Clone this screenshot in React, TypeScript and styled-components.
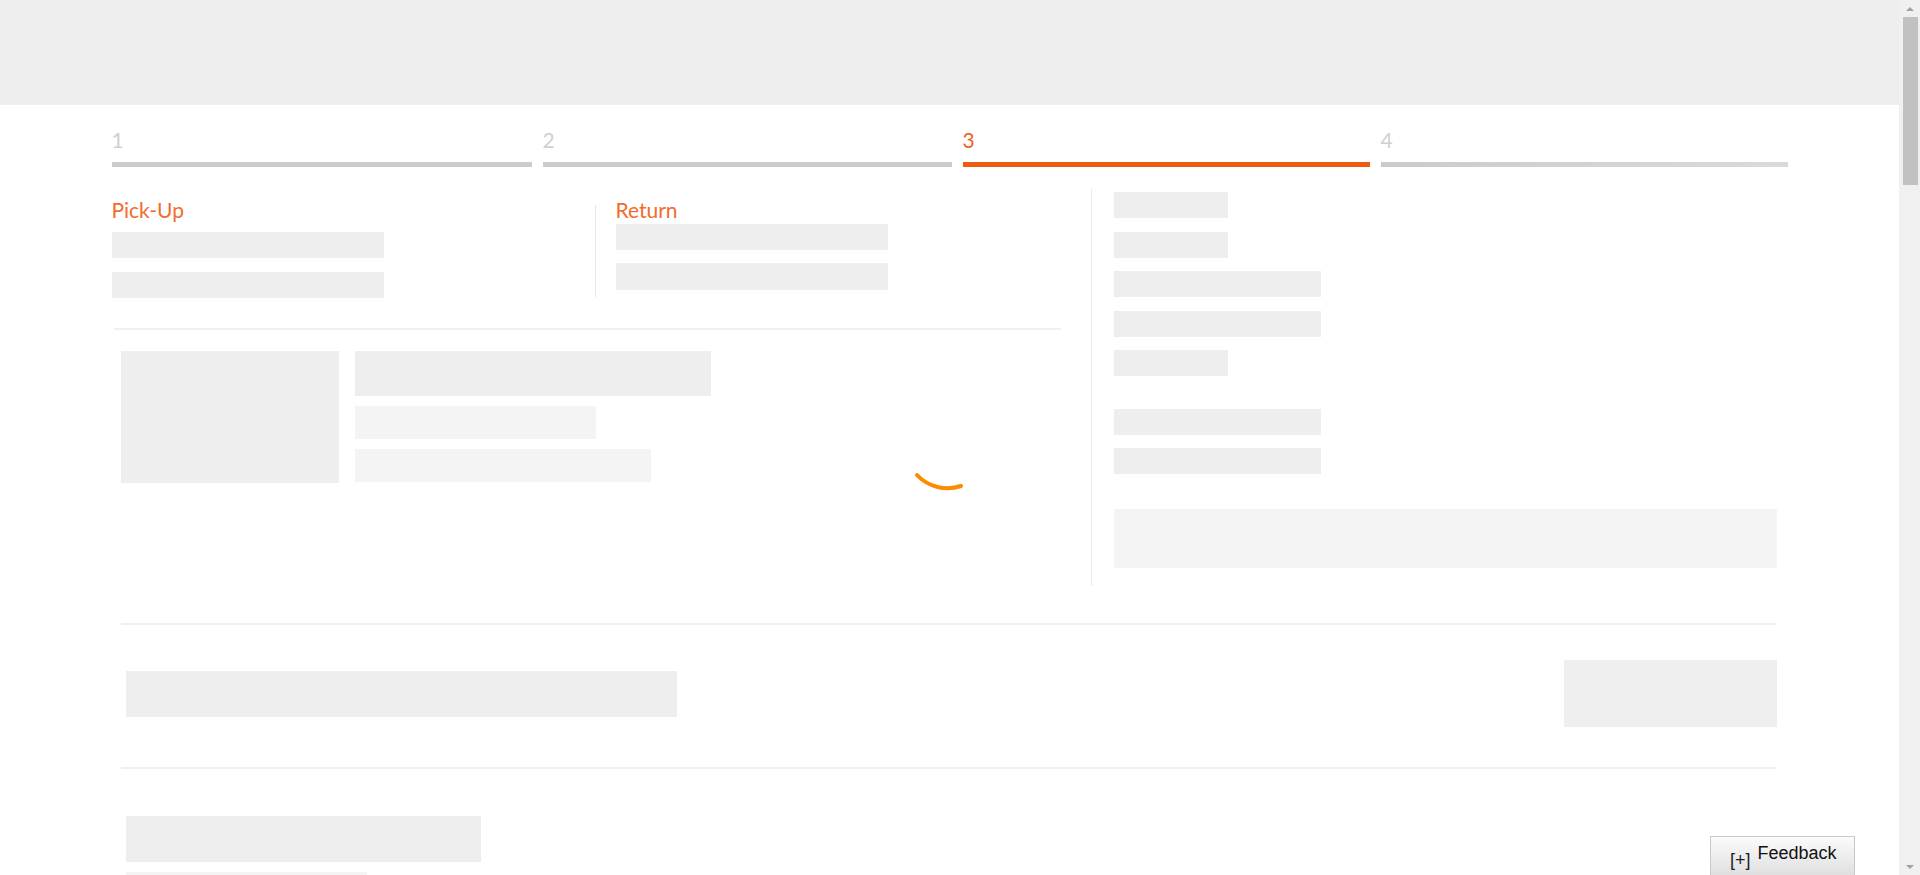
import React from "react";
import styled, { createGlobalStyle } from "styled-components";

const GlobalStyle = createGlobalStyle`
  html, body { margin: 0; padding: 0; background: #ffffff; }
  body { font-family: Lato, "Open Sans", sans-serif; overflow-x: hidden; }
  ::-webkit-scrollbar { width: 0; height: 0; }
`;

const ORANGE = "#ee5a0f";
const TITLE_ORANGE = "#f26c2e";
const PH = "#eeeeee";
const PH_LIGHT = "#f4f4f4";
const LINE = "#f0f0f0";

const Page = styled.div`
  width: calc(100% - 21px);
`;

const Header = styled.header`
  height: 105px;
  background: #eeeeee;
`;

const Main = styled.main`
  width: 1676px;
  margin: 0 auto;
`;

const Steps = styled.nav`
  display: grid;
  grid-template-columns: 420px 409px 407px 407px;
  column-gap: 11px;
  padding-top: 23px;
`;

const Step = styled.div<{ $active?: boolean }>`
  display: flex;
  flex-direction: column;
  color: ${(p) => (p.$active ? "#f0621c" : "#d0d0d0")};
  font-size: 21px;
  line-height: 24px;
`;

const StepBar = styled.div<{ $active?: boolean; $fade?: boolean }>`
  margin-top: 10px;
  height: 5px;
  background: ${(p) =>
    p.$active ? ORANGE : p.$fade ? "linear-gradient(90deg, #cbcbcb, #dadada)" : "#cccccc"};
`;

const Body = styled.section`
  display: flex;
  margin-top: 22px;
`;

const LeftCol = styled.div`
  position: relative;
  width: 979px;
  flex: none;
`;

const Locations = styled.div`
  display: flex;
`;

const PickUp = styled.div`
  width: 483px;
  padding-top: 9px;
`;

const ReturnWrap = styled.div`
  display: flex;
`;

const VDivider = styled.div`
  width: 1px;
  height: 92px;
  margin-top: 16px;
  background: #e6e6e6;
`;

const ReturnBox = styled.div`
  padding: 9px 0 0 20px;
`;

const Title = styled.h3`
  margin: 0;
  font-size: 21px;
  line-height: 24px;
  font-weight: 400;
  color: ${TITLE_ORANGE};
`;

const Stack = styled.div<{ $gap: number; $top: number }>`
  display: flex;
  flex-direction: column;
  gap: ${(p) => p.$gap}px;
  margin-top: ${(p) => p.$top}px;
`;

const Bone = styled.div<{ $w: number; $h: number; $light?: boolean }>`
  width: ${(p) => p.$w}px;
  height: ${(p) => p.$h}px;
  background: ${(p) => (p.$light ? PH_LIGHT : PH)};
  flex: none;
`;

const HLine = styled.div<{ $left: number; $width: number; $top: number }>`
  height: 2px;
  background: ${LINE};
  margin-left: ${(p) => p.$left}px;
  width: ${(p) => p.$width}px;
  margin-top: ${(p) => p.$top}px;
`;

const CarRow = styled.div`
  display: flex;
  gap: 16px;
  margin-top: 21px;
  padding-left: 9px;
`;

const CarLines = styled.div`
  display: flex;
  flex-direction: column;
  gap: 10px;
`;

const Spinner = styled.svg`
  position: absolute;
  left: 788px;
  top: 271px;
  width: 80px;
  height: 40px;
  overflow: visible;
`;

const RightCol = styled.aside`
  flex: 1;
  border-left: 1px solid #ebebeb;
  padding: 3px 11px 18px 22px;
`;

const BigBox = styled.div`
  height: 59px;
  margin-top: 35px;
  background: ${PH_LIGHT};
`;

const Row = styled.div`
  display: flex;
  align-items: center;
  justify-content: space-between;
  margin-top: 35px;
  padding: 0 11px 0 14px;
`;

const Block = styled.div`
  width: 213px;
  height: 67px;
  background: #efefef;
`;

const Bottom = styled.div`
  display: flex;
  flex-direction: column;
  gap: 10px;
  margin-top: 47px;
  padding-left: 14px;
`;

const Feedback = styled.button`
  position: fixed;
  right: 65px;
  bottom: -6px;
  width: 145px;
  height: 45px;
  box-sizing: border-box;
  display: flex;
  align-items: flex-start;
  gap: 7px;
  padding: 6px 0 0 19px;
  border: 1px solid #c9c9c9;
  background: linear-gradient(#fbfbfb, #dcdcdc);
  font-family: "Liberation Sans", Arial, sans-serif;
  color: #111;
  cursor: pointer;
`;

const Plus = styled.span`
  font-size: 18px;
  line-height: 20px;
  margin-top: 7px;
  color: #222;
`;

const FeedbackLabel = styled.span`
  font-size: 18px;
  line-height: 20px;
`;

/* imitation of the browser's vertical scrollbar, lying over the page edge */
const ScrollTrack = styled.div`
  position: fixed;
  top: 0;
  right: 0;
  width: 21px;
  height: 100vh;
  background: #f0f0f0;
  display: flex;
  flex-direction: column;
  align-items: center;
`;

const ScrollArrow = styled.div<{ $down?: boolean }>`
  height: 17px;
  width: 100%;
  display: flex;
  align-items: center;
  justify-content: center;
  &::after {
    content: "";
    border-left: 4px solid transparent;
    border-right: 4px solid transparent;
    ${(p) => (p.$down ? "border-top: 4px solid #a3a3a3;" : "border-bottom: 4px solid #a3a3a3;")}
  }
`;

const ScrollThumb = styled.div`
  width: 15px;
  height: 168px;
  margin-left: 2px;
  background: #c1c1c1;
`;

const ScrollSpace = styled.div`
  flex: 1;
`;

export default function App() {
  const steps = ["1", "2", "3", "4"];
  const rightRows: number[] = [114, 114, 207, 207, 114];
  return (
    <Page>
      <GlobalStyle />
      <Header />
      <Main>
        <Steps>
          {steps.map((s, i) => (
            <Step key={s} $active={i === 2}>
              {s}
              <StepBar $active={i === 2} $fade={i === 3} />
            </Step>
          ))}
        </Steps>
        <Body>
          <LeftCol>
            <Locations>
              <PickUp>
                <Title>Pick-Up</Title>
                <Stack $gap={14} $top={10}>
                  <Bone $w={272} $h={26} />
                  <Bone $w={272} $h={26} />
                </Stack>
              </PickUp>
              <ReturnWrap>
                <VDivider />
                <ReturnBox>
                  <Title>Return</Title>
                  <Stack $gap={13} $top={2}>
                    <Bone $w={272} $h={26} />
                    <Bone $w={272} $h={27} />
                  </Stack>
                </ReturnBox>
              </ReturnWrap>
            </Locations>
            <HLine $left={2} $width={947} $top={30} />
            <CarRow>
              <Bone $w={218} $h={132} />
              <CarLines>
                <Bone $w={356} $h={45} />
                <Bone $w={241} $h={33} $light />
                <Bone $w={296} $h={33} $light />
              </CarLines>
            </CarRow>
            <Spinner viewBox="0 0 80 40">
              <path
                d="M17 15 A42 42 0 0 0 61 26"
                fill="none"
                stroke="#fb8c00"
                strokeWidth="4"
                strokeLinecap="round"
              />
            </Spinner>
          </LeftCol>
          <RightCol>
            <Stack $gap={13.5} $top={0}>
              {rightRows.map((w, i) => (
                <Bone key={i} $w={w} $h={26} />
              ))}
            </Stack>
            <Stack $gap={13} $top={33}>
              <Bone $w={207} $h={26} />
              <Bone $w={207} $h={26} />
            </Stack>
            <BigBox />
          </RightCol>
        </Body>
        <HLine $left={9} $width={1655} $top={37} />
        <Row>
          <Bone $w={551} $h={46} />
          <Block />
        </Row>
        <HLine $left={9} $width={1655} $top={40} />
        <Bottom>
          <Bone $w={355} $h={46} />
          <Bone $w={241} $h={20} $light />
        </Bottom>
      </Main>
      <Feedback type="button">
        <Plus>[+]</Plus>
        <FeedbackLabel>Feedback</FeedbackLabel>
      </Feedback>
      <ScrollTrack aria-hidden="true">
        <ScrollArrow />
        <ScrollThumb />
        <ScrollSpace />
        <ScrollArrow $down />
      </ScrollTrack>
    </Page>
  );
}
